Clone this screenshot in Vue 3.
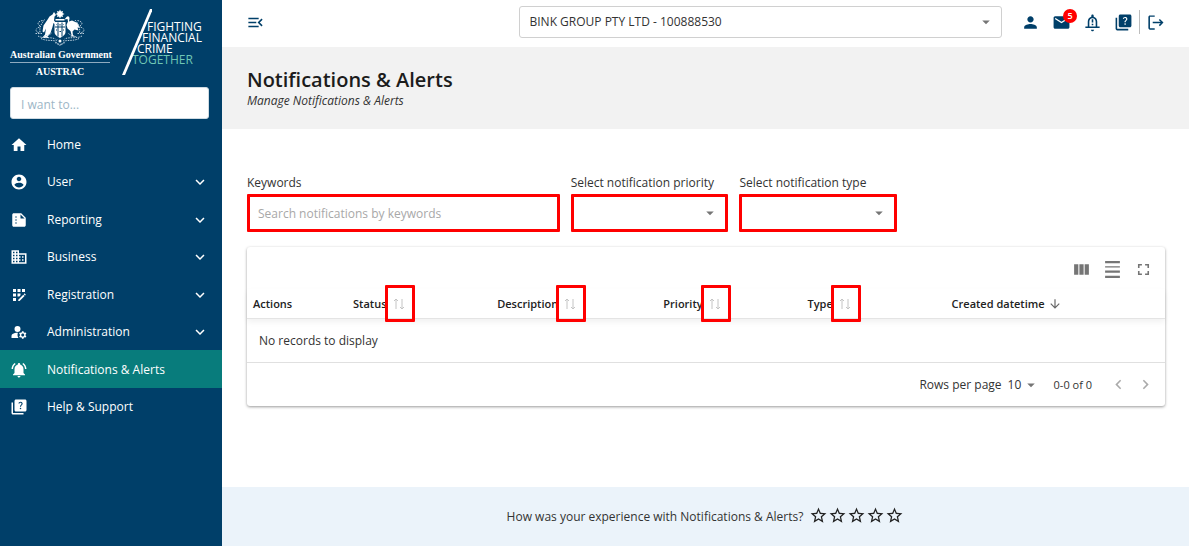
<template>
  <div class="app">
    <aside class="sidebar">
      <div class="brand">
        <div class="crest">
          <svg class="arms" viewBox="0 0 104 76" aria-hidden="true">
            <g fill="#fff">
              <path d="M52 0l2 4 4-1-1 4 4 2-4 2 1 4-4-1-2 4-2-4-4 1 1-4-4-2 4-2-1-4 4 1z" />
              <path d="M43 19h18v3H43z" />
              <path d="M40 5l-3 5-6 4-5 8-7 10-2 12 3 2 4-8-2 12-6 7h14l-3-3 6-7 4-12 2-8 4 3 1-3-4-5 1-8 3-3z" />
              <path d="M65 15c3-3 6-1 6 3l-1 6 6-2 11 5 5 10-5-1 2 6-8-2-4 4 1 8 6 2H73l2-3-2-8-6-5-2-7 3-7-1-5-6 1z" />
              <path d="M41 25h22v20c0 6-6 9-11 12-5-3-11-6-11-12z" />
            </g>
            <g fill="none" stroke="#003f69" stroke-width="2">
              <path d="M42 35h20M48 26v28M56 26v28" />
              <path d="M45 30h1M52 29v3M59 30h1M44 41h2M51 44h3M58 41h2" />
            </g>
            <g fill="none" stroke="#b9cddb" stroke-width="2" stroke-dasharray="3 2">
              <path d="M17 22C8 24 5 28 12 33M11 35C3 38 1 43 10 47M3 48h14M8 53c10 6 25 1 35 6M14 58c9 5 20 3 30 5" />
              <path d="M87 22c9 2 12 6 5 11M93 35c8 3 10 8 1 12M87 48h15M96 53c-10 6-25 1-35 6M90 58c-9 5-20 3-30 5" />
              <path d="M21 20c-4 7-11 13-9 26M82 21c5 6 11 14 9 26M35 47c-5 6-12 4-17 8M69 48c5 5 12 4 17 8" />
              <path d="M46 60c-4 5 0 9 6 10 6-1 10-5 6-10M42 66l10 6 10-6" />
            </g>
            <circle cx="52" cy="63" r="3" fill="#fff" />
          </svg>
          <div class="crest-name">Australian Government</div>
          <div class="crest-agency">AUSTRAC</div>
        </div>
        <div class="campaign">
          <svg class="slash" viewBox="0 0 30 66" aria-hidden="true">
            <path d="M28 0h3L3 66H0z" fill="#fff" />
          </svg>
          <span>FIGHTING</span>
          <span>FINANCIAL</span>
          <span>CRIME</span>
          <span>TOGETHER</span>
        </div>
      </div>

      <input v-model="quickSearch" class="quick-search" type="text" placeholder="I want to..." aria-label="I want to" />

      <nav class="nav">
        <a
          v-for="item in navItems"
          :key="item.label"
          href="#"
          class="nav-item"
          :class="{ active: item.label === current }"
          @click.prevent="current = item.label"
        >
          <svg class="nav-icon" viewBox="0 0 24 24"><path :d="icons[item.icon]" /></svg>
          <span>{{ item.label }}</span>
          <svg v-if="item.expandable" class="nav-chevron" viewBox="0 0 24 24"><path :d="icons.expand" /></svg>
        </a>
      </nav>
    </aside>

    <div class="main">
      <header class="topbar">
        <button class="icon-btn" type="button" aria-label="Collapse menu">
          <svg class="icon" viewBox="0 0 24 24"><path :d="icons.menuOpen" /></svg>
        </button>
        <div class="select-wrap entity">
          <select aria-label="Reporting entity">
            <option>BINK GROUP PTY LTD - 100888530</option>
          </select>
          <svg class="arrow" viewBox="0 0 24 24"><path :d="icons.dropDown" /></svg>
        </div>
        <div class="actions">
          <button class="icon-btn" type="button" aria-label="Profile">
            <svg class="icon" viewBox="0 0 24 24"><path :d="icons.person" /></svg>
          </button>
          <button class="icon-btn" type="button" aria-label="Messages">
            <svg class="icon" viewBox="0 0 24 24"><path :d="icons.mail" /></svg>
            <span class="badge">5</span>
          </button>
          <button class="icon-btn" type="button" aria-label="Alerts">
            <svg class="icon" viewBox="0 0 24 24"><path fill-rule="evenodd" :d="icons.alert" /></svg>
          </button>
          <button class="icon-btn" type="button" aria-label="Help">
            <svg class="icon" viewBox="0 0 24 24"><path :d="icons.quiz" /></svg>
          </button>
          <span class="divider"></span>
          <button class="icon-btn" type="button" aria-label="Log out">
            <svg class="icon" viewBox="0 0 24 24"><path :d="icons.logout" /></svg>
          </button>
        </div>
      </header>

      <section class="page-head">
        <h1>Notifications &amp; Alerts</h1>
        <p>Manage Notifications &amp; Alerts</p>
      </section>

      <main class="content">
        <form class="filters" @submit.prevent>
          <div class="field">
            <label for="keywords">Keywords</label>
            <input id="keywords" v-model="keywords" class="control" type="text" placeholder="Search notifications by keywords" />
          </div>
          <div class="field">
            <label for="priority">Select notification priority</label>
            <div class="select-wrap control">
              <select id="priority"><option></option></select>
              <svg class="arrow" viewBox="0 0 24 24"><path :d="icons.dropDown" /></svg>
            </div>
          </div>
          <div class="field">
            <label for="type">Select notification type</label>
            <div class="select-wrap control">
              <select id="type"><option></option></select>
              <svg class="arrow" viewBox="0 0 24 24"><path :d="icons.dropDown" /></svg>
            </div>
          </div>
        </form>

        <div class="card">
          <div class="toolbar">
            <button class="icon-btn" type="button" aria-label="Show columns">
              <svg class="icon" viewBox="0 0 18 18"><path d="M2 4h4v10H2zM7 4h4v10H7zM12 4h4v10h-4z" /></svg>
            </button>
            <button class="icon-btn" type="button" aria-label="Toggle density">
              <svg class="icon" viewBox="0 0 18 18"><path d="M2 1h14v2H2zM2 6h14v1H2zM2 10h14v2H2zM2 15h14v2H2z" /></svg>
            </button>
            <button class="icon-btn" type="button" aria-label="Full screen">
              <svg class="icon" viewBox="0 0 24 24"><path :d="icons.fullscreen" /></svg>
            </button>
          </div>
          <table>
            <thead>
              <tr>
                <th v-for="col in columns" :key="col.label" :class="col.size">
                  <div class="th-inner">
                    <span>{{ col.label }}</span>
                    <button v-if="col.sort === 'none'" class="sort" type="button" :aria-label="'Sort by ' + col.label">
                      <svg viewBox="0 0 10 12"><path d="M2 11V1M0 3l2-2 2 2M8 1v10M6 9l2 2 2-2" /></svg>
                    </button>
                    <svg v-if="col.sort === 'desc'" class="sorted" viewBox="0 0 24 24"><path :d="icons.arrowDown" /></svg>
                  </div>
                </th>
              </tr>
            </thead>
            <tbody>
              <tr>
                <td :colspan="columns.length">No records to display</td>
              </tr>
            </tbody>
          </table>
          <div class="pagination">
            <label for="rows">Rows per page</label>
            <div class="select-wrap rows">
              <select id="rows">
                <option>10</option>
                <option>25</option>
              </select>
              <svg class="arrow" viewBox="0 0 24 24"><path :d="icons.dropDown" /></svg>
            </div>
            <span class="range">0-0 of 0</span>
            <button class="icon-btn" type="button" aria-label="Previous page" disabled>
              <svg class="icon" viewBox="0 0 24 24"><path :d="icons.prev" /></svg>
            </button>
            <button class="icon-btn" type="button" aria-label="Next page" disabled>
              <svg class="icon" viewBox="0 0 24 24"><path :d="icons.next" /></svg>
            </button>
          </div>
        </div>
      </main>

      <footer class="feedback">
        <span>How was your experience with Notifications &amp; Alerts?</span>
        <div class="stars">
          <button v-for="n in 5" :key="n" type="button" class="icon-btn" :aria-label="n + ' stars'" @click="rating = n">
            <svg class="icon" viewBox="0 0 24 24"><path :d="icons.star" /></svg>
          </button>
        </div>
      </footer>
    </div>
  </div>
</template>

<script setup>
import { ref } from 'vue';

const current = ref('Notifications & Alerts');
const quickSearch = ref('');
const keywords = ref('');
const rating = ref(0);

const navItems = [
  { label: 'Home', icon: 'home' },
  { label: 'User', icon: 'account', expandable: true },
  { label: 'Reporting', icon: 'report', expandable: true },
  { label: 'Business', icon: 'business', expandable: true },
  { label: 'Registration', icon: 'registration', expandable: true },
  { label: 'Administration', icon: 'admin', expandable: true },
  { label: 'Notifications & Alerts', icon: 'bell' },
  { label: 'Help & Support', icon: 'quiz' }
];

const columns = [
  { label: 'Actions', size: 'col-actions' },
  { label: 'Status', size: 'col-mid', sort: 'none' },
  { label: 'Description', size: 'col-desc', sort: 'none' },
  { label: 'Priority', size: 'col-mid', sort: 'none' },
  { label: 'Type', size: 'col-mid', sort: 'none' },
  { label: 'Created datetime', size: 'col-date', sort: 'desc' }
];

const icons = {
  home: 'M10 20v-6h4v6h5v-8h3L12 3 2 12h3v8z',
  account: 'M12 2C6.48 2 2 6.48 2 12s4.48 10 10 10 10-4.48 10-10S17.52 2 12 2zm0 3c1.66 0 3 1.34 3 3s-1.34 3-3 3-3-1.34-3-3 1.34-3 3-3zm0 14.2c-2.5 0-4.71-1.28-6-3.22.03-1.99 4-3.08 6-3.08 1.99 0 5.97 1.09 6 3.08-1.29 1.94-3.5 3.22-6 3.22z',
  report: 'M15 3H5c-1.1 0-1.99.9-1.99 2L3 19c0 1.1.89 2 2 2h14c1.1 0 2-.9 2-2V9l-6-6zM8 17c-.55 0-1-.45-1-1s.45-1 1-1 1 .45 1 1-.45 1-1 1zm0-4c-.55 0-1-.45-1-1s.45-1 1-1 1 .45 1 1-.45 1-1 1zm0-4c-.55 0-1-.45-1-1s.45-1 1-1 1 .45 1 1-.45 1-1 1zm6 1V4.5l5.5 5.5H14z',
  business: 'M12 7V3H2v18h20V7H12zM6 19H4v-2h2v2zm0-4H4v-2h2v2zm0-4H4V9h2v2zm0-4H4V5h2v2zm4 12H8v-2h2v2zm0-4H8v-2h2v2zm0-4H8V9h2v2zm0-4H8V5h2v2zm10 12h-8v-2h2v-2h-2v-2h2v-2h-2V9h8v10zm-2-8h-2v2h2v-2zm0 4h-2v2h2v-2z',
  registration: 'M10 4h4v4h-4zM4 16h4v4H4zM4 10h4v4H4zM4 4h4v4H4zM14 12.42V10h-4v4h2.42zM20.88 11.29l-1.17-1.17c-.16-.16-.42-.16-.58 0l-.88.88L20 12.75l.88-.88c.16-.16.16-.42 0-.58zM11 18.25V20h1.75l6.67-6.67-1.75-1.75zM16 4h4v4h-4z',
  admin: 'M10 4a4 4 0 1 0 0 8 4 4 0 0 0 0-8zM10.67 13.02C10.45 13.01 10.23 13 10 13c-2.42 0-4.68.67-6.61 1.82C2.51 15.34 2 16.32 2 17.35V20h9.26A6.963 6.963 0 0 1 10 16c0-1.07.25-2.09.67-2.98zM20.75 16c0-.22-.03-.42-.06-.63l1.14-1.01-1-1.73-1.45.49c-.32-.27-.68-.48-1.08-.63L18 11h-2l-.3 1.49c-.4.15-.76.36-1.08.63l-1.45-.49-1 1.73 1.14 1.01c-.03.21-.06.41-.06.63s.03.42.06.63l-1.14 1.01 1 1.73 1.45-.49c.32.27.68.48 1.08.63L16 21h2l.3-1.49c.4-.15.76-.36 1.08-.63l1.45.49 1-1.73-1.14-1.01c.03-.21.06-.41.06-.63zM17 18c-1.1 0-2-.9-2-2s.9-2 2-2 2 .9 2 2-.9 2-2 2z',
  bell: 'M7.58 4.08L6.15 2.65C3.75 4.48 2.17 7.3 2.03 10.5h2c.15-2.65 1.51-4.97 3.55-6.42zm12.39 6.42h2c-.15-3.2-1.73-6.02-4.12-7.85l-1.42 1.43c2.02 1.45 3.39 3.77 3.54 6.42zM18 11c0-3.07-1.64-5.64-4.5-6.32V4c0-.83-.67-1.5-1.5-1.5s-1.5.67-1.5 1.5v.68C7.63 5.36 6 7.92 6 11v5l-2 2v1h16v-1l-2-2v-5zm-6 11c.14 0 .27-.01.4-.04.65-.14 1.18-.58 1.44-1.18.1-.24.15-.5.15-.78h-4c.01 1.1.9 2 2.01 2z',
  quiz: 'M4 6H2v14c0 1.1.9 2 2 2h14v-2H4V6zM20 2H8c-1.1 0-2 .9-2 2v12c0 1.1.9 2 2 2h12c1.1 0 2-.9 2-2V4c0-1.1-.9-2-2-2zM14.01 15c-.59 0-1.05-.47-1.05-1.05 0-.59.47-1.04 1.05-1.04.59 0 1.04.45 1.04 1.04-.01.58-.45 1.05-1.04 1.05zm2.5-6.17c-.63.93-1.23 1.21-1.56 1.81-.13.24-.18.4-.18 1.18h-1.52c0-.41-.06-1.08.26-1.65.41-.73 1.18-1.16 1.63-1.8.48-.68.21-1.94-1.14-1.94-.88 0-1.32.67-1.5 1.23l-1.37-.57C11.51 5.96 12.52 5 13.99 5c1.23 0 2.08.56 2.51 1.26.37.61.58 1.73.01 2.57z',
  expand: 'M16.59 8.59 12 13.17 7.41 8.59 6 10l6 6 6-6z',
  menuOpen: 'M3 18h13v-2H3v2zM3 6v2h13V6H3zm0 7h10v-2H3v2zm18 2.59L17.42 12 21 8.41 19.59 7l-5 5 5 5L21 15.59z',
  dropDown: 'M7 10l5 5 5-5z',
  person: 'M12 12c2.21 0 4-1.79 4-4s-1.79-4-4-4-4 1.79-4 4 1.79 4 4 4zm0 2c-2.67 0-8 1.34-8 4v2h16v-2c0-2.66-5.33-4-8-4z',
  mail: 'M20 4H4c-1.1 0-1.99.9-1.99 2L2 18c0 1.1.9 2 2 2h16c1.1 0 2-.9 2-2V6c0-1.1-.9-2-2-2zm0 4l-8 5-8-5V6l8 5 8-5v2z',
  alert: 'M12 23c1.1 0 2-.9 2-2h-4c0 1.1.9 2 2 2zM18 17v-6c0-3.07-1.63-5.64-4.5-6.32V3.500c0-.83-.67-1.5-1.5-1.5s-1.5.67-1.5 1.500v1.180C7.640 5.360 6 7.920 6 11v6H3v2h18v-2zM16 17H8v-6c0-2.480 1.510-4.500 4-4.500s4 2.020 4 4.500zM11 8h2v4h-2zM11 13.500h2v2h-2z',
  logout: 'M17.5 7.5l-1.3 1.3 2.4 2.4H8.5v1.7h10.1l-2.4 2.4 1.3 1.3 4.6-4.6zM5 4.8h6V3H5c-1.1 0-2 .9-2 2v14c0 1.1.9 2 2 2h6v-1.8H5z',
  fullscreen: 'M7 14H5v5h5v-2H7v-3zm-2-4h2V7h3V5H5v5zm12 7h-3v2h5v-5h-2v3zM14 5v2h3v3h2V5h-5z',
  arrowDown: 'M20 12l-1.41-1.41L13 16.17V4h-2v12.17l-5.58-5.59L4 12l8 8 8-8z',
  prev: 'M15.41 7.41L14 6l-6 6 6 6 1.41-1.41L10.83 12z',
  next: 'M10 6L8.59 7.41 13.17 12l-4.58 4.59L10 18l6-6z',
  star: 'M22 9.24l-7.19-.62L12 2 9.19 8.63 2 9.24l5.46 4.73L5.82 21 12 17.27 18.18 21l-1.63-7.03L22 9.24zM12 15.4l-3.76 2.27 1-4.28-3.32-2.88 4.38-.38L12 6.1l1.71 4.04 4.38.38-3.32 2.88 1 4.28L12 15.4z'
};
</script>

<style>
body {
  margin: 0;
  background: #fff;
}
</style>

<style scoped>
* {
  box-sizing: border-box;
}

.app {
  display: flex;
  min-height: 100vh;
  font-family: "Open Sans", "Noto Sans", sans-serif;
  font-size: 12px;
  line-height: 16px;
  color: #333;
}

input,
select,
button {
  font: inherit;
  color: inherit;
}

svg {
  display: block;
  fill: currentColor;
}

.sidebar {
  flex: 0 0 222px;
  background: #003f69;
  color: #fff;
}

.brand {
  display: flex;
  gap: 12px;
  height: 87px;
  padding: 9px 10px 0;
}

.crest {
  width: 100px;
  font: bold 10px/14px "Liberation Serif", serif;
  text-align: center;
  white-space: nowrap;
}

.arms {
  width: 52px;
  height: 39px;
  margin: 0 auto;
}

.crest-name {
  border-bottom: 1px solid #8fabc0;
}

.crest-agency {
  padding-top: 2px;
}

.campaign {
  position: relative;
  display: flex;
  flex-direction: column;
  padding-top: 12px;
  font-size: 12px;
  line-height: 11px;
}

.slash {
  position: absolute;
  top: 0;
  left: 0;
  width: 30px;
  height: 66px;
}

.campaign span:nth-of-type(1) {
  padding-left: 25px;
}

.campaign span:nth-of-type(2) {
  padding-left: 20px;
}

.campaign span:nth-of-type(3) {
  padding-left: 15px;
}

.campaign span:nth-of-type(4) {
  padding-left: 10px;
  color: #6fc7b5;
}

.quick-search {
  display: block;
  width: 199px;
  height: 32px;
  margin: 0 10px 6px;
  padding: 2px 10px 0;
  border: 1px solid #cfdbe3;
  border-radius: 3px;
  background: #fff;
  color: #333;
}

.quick-search::placeholder {
  color: #9db6c6;
}

.nav-item {
  display: flex;
  align-items: center;
  height: 38px;
  padding: 1px 13px 0 10px;
  color: #fff;
  text-decoration: none;
}

.nav-item:nth-child(even) {
  height: 37px;
}

.nav-item.active {
  background: #087c7c;
}

.nav-icon {
  width: 18px;
  height: 18px;
  margin-right: 19px;
}

.nav-chevron {
  width: 18px;
  height: 18px;
  margin-left: auto;
}

.main {
  flex: 1;
  display: flex;
  flex-direction: column;
  min-width: 0;
}

.topbar {
  display: flex;
  align-items: center;
  height: 47px;
  padding: 0 24px 3px;
  color: #003f69;
}

.icon-btn {
  position: relative;
  padding: 0;
  border: none;
  background: none;
  cursor: pointer;
}

.icon {
  width: 19px;
  height: 19px;
}

.select-wrap {
  position: relative;
  color: #333;
}

.select-wrap select {
  width: 100%;
  height: 100%;
  padding: 0 10px;
  border: none;
  background: none;
  appearance: none;
}

.arrow {
  position: absolute;
  top: 50%;
  right: 6px;
  width: 18px;
  height: 18px;
  margin-top: -9px;
  color: #757575;
  pointer-events: none;
}

.entity {
  width: calc(50% + 24px);
  height: 32px;
  margin-left: auto;
  margin-right: 19px;
  border: 1px solid #d0d0d0;
  border-radius: 3px;
}

.actions {
  display: flex;
  align-items: center;
  gap: 12px;
}

.badge {
  position: absolute;
  top: -4px;
  right: -6px;
  width: 14px;
  height: 14px;
  border-radius: 50%;
  background: #f00;
  color: #fff;
  font-size: 9px;
  font-weight: 600;
  line-height: 14px;
  text-align: center;
}

.divider {
  width: 1px;
  height: 24px;
  margin: 0 -6px;
  background: #bdbdbd;
}

.page-head {
  height: 82px;
  padding: 20px 25px 0;
  background: #f2f2f2;
}

h1 {
  margin: 0;
  color: #1c1c1c;
  font-size: 20px;
  font-weight: 600;
  line-height: 26px;
}

.page-head p {
  margin: 0;
  font-style: italic;
}

.content {
  padding: 46px 24px 32px 25px;
}

.filters {
  display: grid;
  grid-template-columns: 313fr 158fr 158fr 257fr;
  gap: 11px;
}

.field label {
  display: block;
  margin-bottom: 3px;
  white-space: nowrap;
}

.control {
  display: block;
  width: 100%;
  height: 38px;
  padding: 0 8px;
  border: 3px solid #f00;
  border-radius: 1px;
  background: #fff;
}

.control::placeholder {
  color: #a8a8a8;
}

.card {
  margin-top: 15px;
  border-radius: 3px;
  box-shadow: 0 1px 3px rgba(0, 0, 0, 0.4);
}

.toolbar {
  display: flex;
  justify-content: flex-end;
  align-items: center;
  gap: 12px;
  height: 42px;
  padding: 2px 12px 0;
  color: #757575;
}

table {
  width: 100%;
  border-collapse: collapse;
  table-layout: fixed;
}

thead {
  box-shadow: 0 3px 6px rgba(0, 0, 0, 0.06);
}

th {
  height: 29px;
  padding: 0 0 0 6px;
  border-bottom: 1px solid #e4e4e4;
  color: #222;
  font-size: 11px;
  font-weight: 600;
  text-align: left;
}

.col-actions {
  width: 10.9%;
}

.col-mid {
  width: 15.7%;
}

.col-desc {
  width: 18.1%;
}

.col-date {
  width: 23.9%;
}

.th-inner {
  display: flex;
  align-items: center;
}

.sort {
  width: 30px;
  height: 37px;
  margin: -4px 0 -4px -2px;
  padding: 0 6px;
  border: 3px solid #f00;
  border-radius: 1px;
  background: none;
  cursor: pointer;
}

.sort svg {
  width: 10px;
  height: 12px;
  fill: none;
  stroke: #c4c4c4;
}

.sorted {
  width: 14px;
  height: 14px;
  margin-left: 3px;
  color: #666;
}

td {
  height: 44px;
  padding: 0 12px;
  border-bottom: 1px solid #e0e0e0;
}

.pagination {
  display: flex;
  align-items: center;
  justify-content: flex-end;
  height: 43px;
  padding: 0 10px;
}

.rows {
  width: 32px;
  height: 24px;
  margin-left: 6px;
}

.rows select {
  padding: 0;
}

.rows .arrow {
  right: 0;
}

.range {
  margin: 0 17px 0 14px;
  font-size: 11px;
}

.pagination .icon-btn {
  color: #aaa;
}

.pagination .icon-btn + .icon-btn {
  margin-left: 8px;
}

.feedback {
  display: flex;
  align-items: center;
  justify-content: center;
  gap: 6px;
  height: 59px;
  margin-top: auto;
  background: #ebf3fa;
}

.stars {
  display: flex;
  padding-bottom: 3px;
  color: #222;
}
</style>
